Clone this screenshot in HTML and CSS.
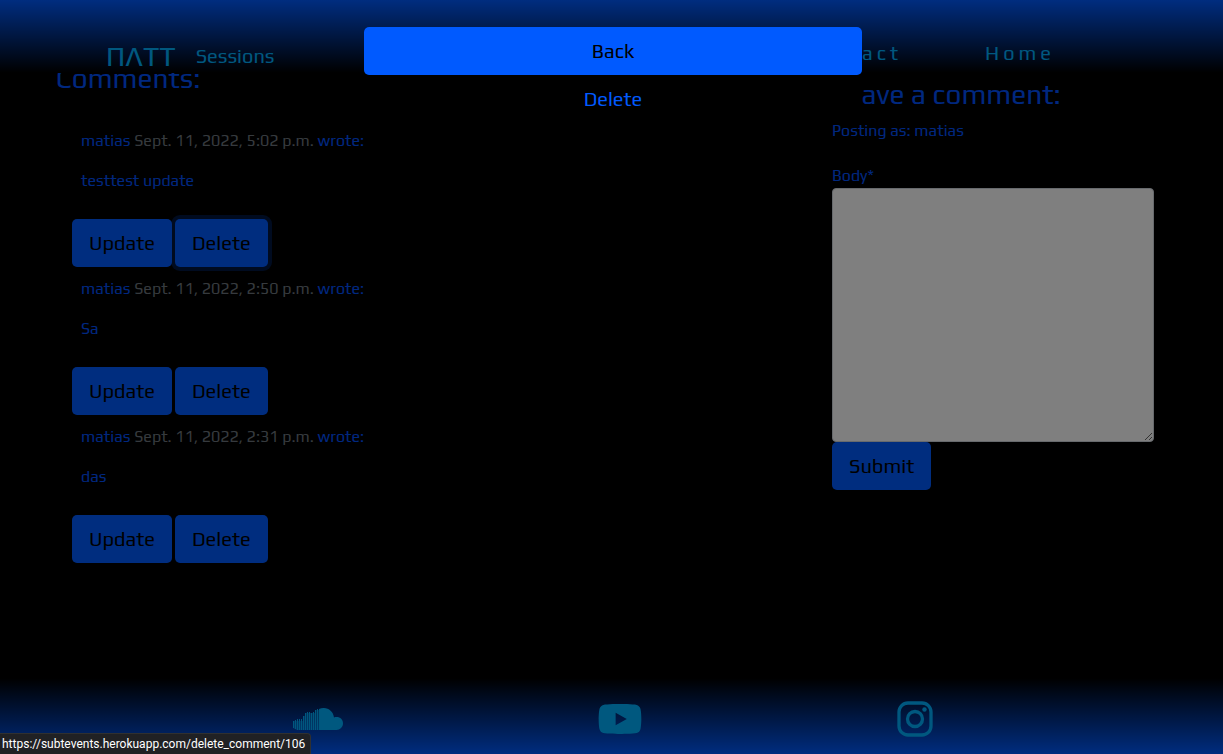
FILE: index.html
```html
<!DOCTYPE html>
<html lang="en">
<head>
<meta charset="utf-8">
<meta name="viewport" content="width=device-width, initial-scale=1">
<title>Sessions</title>
<link rel="stylesheet" href="styles.css">
</head>
<body>
<header class="site-header">
  <div class="brand">
    <a class="logo" href="#">ΠΛTT</a>
    <a class="brand-name" href="#">Sessions</a>
  </div>
  <nav class="site-nav">
    <a href="#">Contact</a>
    <a href="#">Home</a>
  </nav>
</header>

<main class="page">
  <section class="comments">
    <h3 class="heading">Comments:</h3>
    <article class="comment">
      <p class="meta">matias <span class="date">Sept. 11, 2022, 5:02 p.m.</span> wrote:</p>
      <p class="body">testtest update</p>
      <div class="actions"><button class="btn" type="button">Update</button><button class="btn focused" type="button">Delete</button></div>
    </article>
    <article class="comment">
      <p class="meta">matias <span class="date">Sept. 11, 2022, 2:50 p.m.</span> wrote:</p>
      <p class="body">Sa</p>
      <div class="actions"><button class="btn" type="button">Update</button><button class="btn" type="button">Delete</button></div>
    </article>
    <article class="comment">
      <p class="meta">matias <span class="date">Sept. 11, 2022, 2:31 p.m.</span> wrote:</p>
      <p class="body">das</p>
      <div class="actions"><button class="btn" type="button">Update</button><button class="btn" type="button">Delete</button></div>
    </article>
  </section>

  <section class="leave">
    <h3 class="heading">Leave a comment:</h3>
    <p class="posting">Posting as: matias</p>
    <form class="form">
      <label for="body">Body*</label>
      <textarea id="body" name="body"></textarea>
      <button class="btn" type="submit">Submit</button>
    </form>
  </section>
</main>

<footer class="site-footer">
  <a href="#" aria-label="SoundCloud">
    <svg width="50" height="22" viewBox="0 0 50 22" fill="currentColor">
      <path d="M0 13h1v7H0zM2 12h1v9H2zM4 11h1v11H4zM6 11h1v11H6zM8 11h1v11H8zM10 8h1v14h-1zM12 5h1v17h-1zM14 4h1v18h-1zM16 4h1v18h-1zM18 5h1v17h-1zM20 4h1v18h-1zM22 2h1v20h-1zM24 1h1v21h-1z"/>
      <path opacity=".45" d="M0 13h26v9H4L0 20zM10 8h16v5H10zM12 5h14v3H12zM22 2h4v3h-4z"/>
      <path d="M26 1C33-2 40 2 41 9.500C46 8 50 11 50 15.500C50 19 47 22 43.500 22H26z"/>
    </svg>
  </a>
  <a href="#" aria-label="YouTube">
    <svg width="44" height="30" viewBox="14 64 548 384" fill="currentColor">
      <path d="M549.655 124.083c-6.281-23.650-24.787-42.276-48.284-48.597C458.781 64 288 64 288 64S117.220 64 74.629 75.486c-23.497 6.322-42.003 24.947-48.284 48.597-11.412 42.867-11.412 132.305-11.412 132.305s0 89.438 11.412 132.305c6.281 23.650 24.787 41.500 48.284 47.821C117.220 448 288 448 288 448s170.780 0 213.371-11.486c23.497-6.321 42.003-24.171 48.284-47.821 11.412-42.867 11.412-132.305 11.412-132.305s0-89.438-11.412-132.305zm-317.510 213.508V175.185l142.739 81.205-142.739 81.201z"/>
    </svg>
  </a>
  <a href="#" aria-label="Instagram">
    <svg width="36" height="36" viewBox="0 0 36 36" fill="none" stroke="currentColor">
      <rect x="2" y="2" width="32" height="32" rx="9" stroke-width="3.300"/>
      <circle cx="18" cy="18" r="7.500" stroke-width="3.300"/>
      <circle cx="27.500" cy="8.500" r="2.200" fill="currentColor" stroke="none"/>
    </svg>
  </a>
</footer>

<div class="backdrop">
  <div class="dialog" role="dialog" aria-label="Delete comment">
    <button class="btn" type="button">Back</button>
    <a class="btn btn-dark" href="#">Delete</a>
  </div>
</div>
<div class="status">https://subtevents.herokuapp.com/delete_comment/106</div>
</body>
</html>
```
FILE: styles.css
```css
* {
  box-sizing: border-box;
}

body {
  margin: 0;
  min-height: 100vh;
  background: #000;
  color: #0050ff;
  font: 16px/24px Play, Roboto, sans-serif;
}

a {
  color: inherit;
  text-decoration: none;
}

p,
h3 {
  margin: 0;
}

.site-header {
  position: fixed;
  inset: 0 0 auto;
  z-index: 1;
  height: 73px;
  padding: 36px 168px 0 106px;
  display: flex;
  justify-content: space-between;
  background: linear-gradient(#005aff, #000);
  color: #00b0ff;
}

.brand {
  display: flex;
  align-items: center;
  gap: 20px;
  height: 40px;
}

.logo {
  font-size: 28px;
  line-height: 40px;
}

.brand-name {
  font-size: 20px;
  line-height: 40px;
}

.site-nav {
  display: flex;
  gap: 83px;
  font-size: 20px;
  line-height: 34px;
  letter-spacing: 4px;
}

.page {
  display: flex;
  justify-content: space-between;
  padding: 61px 69px 90px 56px;
}

.heading {
  font-size: 28px;
  font-weight: 400;
  line-height: 34px;
}

.comments {
  display: flex;
  flex-direction: column;
}

.comments .heading {
  margin-bottom: 34px;
}

.comment {
  padding: 0 16px 10px;
}

.meta,
.body {
  padding-left: 9px;
}

.date {
  color: #6c757d;
}

.body {
  margin: 16px 0 26px;
}

.actions {
  display: flex;
  gap: 3px;
}

.btn {
  padding: 9px 17px;
  border: 0;
  border-radius: 5px;
  background: #005aff;
  color: #000;
  font: 20px/30px Play, Roboto, sans-serif;
  text-align: center;
  cursor: pointer;
}

.focused {
  box-shadow: 0 0 0 4px rgba(0, 90, 255, 0.25);
}

.leave {
  width: 322px;
  padding-top: 16px;
}

.posting {
  margin: 8px 0 21px;
}

.form {
  display: flex;
  flex-direction: column;
  align-items: flex-start;
}

textarea {
  width: 100%;
  height: 254px;
  border: 1px solid #ced4da;
  border-radius: 4px;
  background: #fff;
  resize: both;
}

.site-footer {
  position: fixed;
  inset: auto 0 0;
  height: 76px;
  padding: 6px 163px 0 165px;
  display: flex;
  justify-content: space-around;
  align-items: center;
  background: linear-gradient(#000, #005aff);
  color: #00b0ff;
}

.site-footer svg {
  display: block;
}

.backdrop {
  position: fixed;
  inset: 0;
  z-index: 2;
  padding: 27px 0 0 3px;
  background: rgba(0, 0, 0, 0.5);
}

.dialog {
  max-width: 498px;
  margin: 0 auto;
  display: grid;
  background: #000;
  border-radius: 5px;
}

.btn-dark {
  background: #000;
  color: #005aff;
}

.status {
  position: fixed;
  left: 0;
  bottom: 0;
  z-index: 3;
  padding: 2px 5px 1px 2px;
  border: 1px solid #303030;
  border-width: 1px 1px 0 0;
  border-top-right-radius: 4px;
  background: #202124;
  color: #fff;
  font: 12px/17px "Segoe UI", Roboto, sans-serif;
}
```
